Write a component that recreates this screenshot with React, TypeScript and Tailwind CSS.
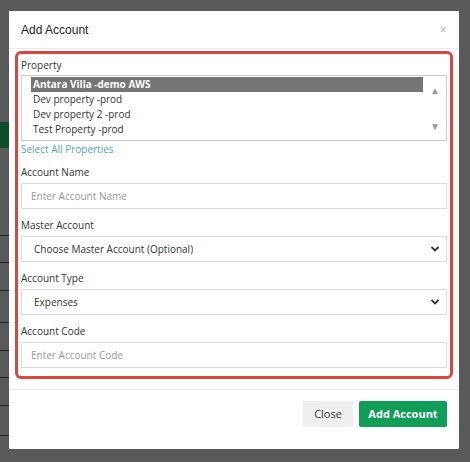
export default function App() {
  const f = { fontFamily: '"Open Sans", "Liberation Sans", sans-serif' };
  const lines = [235, 262, 290, 322, 350, 377, 405, 435];
  return (
    <div className="relative w-[470px] h-[462px] bg-[#595959] overflow-hidden" style={f}>
      <div className="absolute left-0 top-[122px] w-[9px] h-[26px] bg-[#0f4d2a]" />
      {lines.map((y) => (
        <div key={y} className="absolute left-0 w-[9px] h-px bg-[#222]" style={{ top: y }} />
      ))}
      <div className="absolute left-[9px] top-[11px] w-[450px] h-[438px] bg-white flex flex-col">
        <div className="h-[38px] flex items-center justify-between px-[12px] border-b border-[#e9ecef]">
          <span className="text-[12px] text-[#222]" style={{ fontFamily: '"Liberation Sans", Arial, sans-serif' }}>Add Account</span>
          <span className="text-[#c8c8c8] text-[13px] font-bold">×</span>
        </div>
        <div className="mx-[6px] mt-[2px] border-[3px] border-[#d9473e] rounded-[6px] px-[3px] pt-[4px] pb-[8px] flex flex-col text-[#333]">
          <label className="text-[10px] mb-[2px]">Property</label>
          <div className="border border-[#ccc] h-[66px] flex">
            <div className="flex-1 pl-[9px] pt-[1px] text-[10px] leading-[15px]">
              <div className="bg-[#757575] text-white font-bold px-[2px] mr-[1px]">Antara Villa -demo AWS</div>
              <div className="px-[2px]">Dev property -prod</div>
              <div className="px-[2px]">Dev property 2 -prod</div>
              <div className="px-[2px]">Test Property -prod</div>
            </div>
            <div className="w-[22px] flex flex-col items-center justify-between py-[9px] text-[#999] text-[10px] leading-none">
              <span>▲</span><span>▼</span>
            </div>
          </div>
          <span className="text-[10px] text-[#5ba0c4] mt-[1px] mb-[8px]">Select All Properties</span>
          {[
            ["Account Name", "Enter Account Name", false],
            ["Master Account", "Choose Master Account (Optional)", true],
            ["Account Type", "Expenses", true],
            ["Account Code", "Enter Account Code", false],
          ].map(([l, p, sel], i) => (
            <div key={i} className={i < 3 ? "mb-[9px]" : ""}>
              <div className="text-[10px] mb-[3px]">{l as string}</div>
              <div className={`border border-[#ddd] h-[26px] flex items-center justify-between ${sel ? "pl-[12px]" : "pl-[9px]"} pr-[6px] text-[10px] ${sel ? "text-[#333]" : "text-[#999]"}`}>
                <span>{p as string}</span>
                {sel && (
                  <svg width="10" height="8" viewBox="0 0 10 8"><path d="M1.5 2 L5 5.5 L8.5 2" stroke="#333" strokeWidth="1.8" fill="none" /></svg>
                )}
              </div>
            </div>
          ))}
        </div>
        <div className="mt-[10px] border-t border-[#e9ecef] flex justify-end items-center gap-[6px] px-[12px] pt-[11px]">
          <button className="bg-[#efefef] text-[#333] text-[11px] h-[26px] w-[50px]">Close</button>
          <button className="bg-[#0f9d58] text-white font-bold text-[11px] h-[26px] w-[88px] rounded-[2px]">Add Account</button>
        </div>
      </div>
    </div>
  );
}
